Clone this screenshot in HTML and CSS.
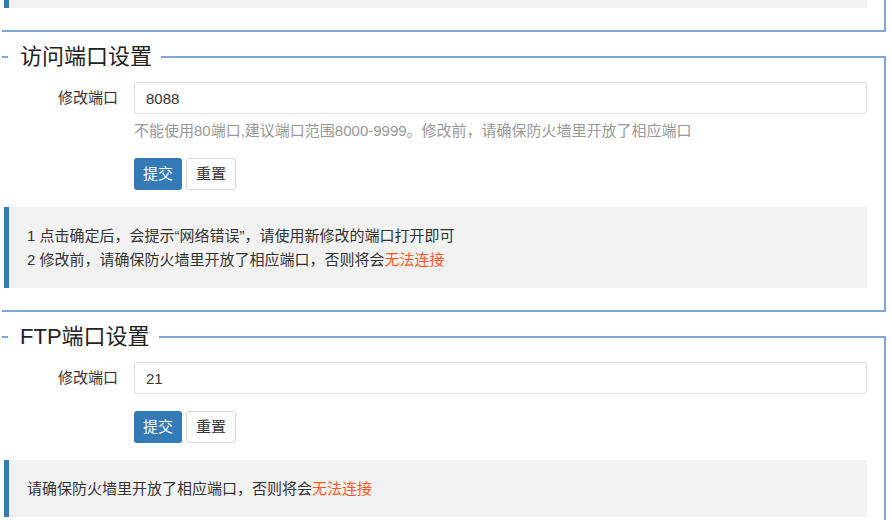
FILE: index.html
```html
<!DOCTYPE html>
<html lang="zh-CN">
<head>
<meta charset="utf-8">
<title>端口设置</title>
<link rel="stylesheet" href="styles.css">
</head>
<body>
<div class="page">
  <div class="tail">
    <div class="quote quote-cut"></div>
  </div>

  <fieldset class="panel">
    <legend class="panel-title">访问端口设置</legend>
    <form class="form">
      <div class="row">
        <label class="label">修改端口</label>
        <div class="field">
          <input class="input" type="text" value="8088">
          <div class="help">不能使用80端口,建议端口范围8000-9999。修改前，请确保防火墙里开放了相应端口</div>
        </div>
      </div>
      <div class="row">
        <span class="label"></span>
        <div class="actions">
          <button type="button" class="btn btn-primary">提交</button>
          <button type="button" class="btn btn-default">重置</button>
        </div>
      </div>
    </form>
    <div class="quote">
      <p>1 点击确定后，会提示“网络错误”，请使用新修改的端口打开即可</p>
      <p>2 修改前，请确保防火墙里开放了相应端口，否则将会<span class="warn">无法连接</span></p>
    </div>
  </fieldset>

  <fieldset class="panel">
    <legend class="panel-title">FTP端口设置</legend>
    <form class="form">
      <div class="row">
        <label class="label">修改端口</label>
        <div class="field">
          <input class="input" type="text" value="21">
        </div>
      </div>
      <div class="row">
        <span class="label"></span>
        <div class="actions">
          <button type="button" class="btn btn-primary">提交</button>
          <button type="button" class="btn btn-default">重置</button>
        </div>
      </div>
    </form>
    <div class="quote">
      <p>请确保防火墙里开放了相应端口，否则将会<span class="warn">无法连接</span></p>
    </div>
  </fieldset>
</div>
</body>
</html>
```

FILE: styles.css
```css
html, body {
  margin: 0;
  padding: 0;
  background: #fff;
  overflow: hidden;
}

body {
  font-family: "Liberation Sans", "Noto Sans CJK SC", sans-serif;
  font-size: 15px;
  color: #333;
}

.page {
  padding: 0 6px 0 2px;
}

.tail {
  border-right: 2px solid #7ea7d8;
  border-bottom: 2px solid #7ea7d8;
  padding: 0 17px 22px 2px;
}

.panel {
  margin: 10px 0 0 0;
  min-width: 0;
  border: 2px solid #7ea7d8;
  border-left: 0;
  padding: 10px 17px 22px 2px;
}

.panel-title {
  margin-left: 4px;
  padding: 0 9px 0 12px;
  font-size: 22px;
  line-height: 30px;
  color: #222;
}

.form {
  margin: 0;
}

.row {
  display: flex;
  align-items: flex-start;
  margin-bottom: 17px;
}

.label {
  flex: 0 0 130px;
  box-sizing: border-box;
  padding-right: 16px;
  text-align: right;
  line-height: 32px;
  color: #333;
}

.field {
  flex: 1;
  min-width: 0;
}

.input {
  display: block;
  box-sizing: border-box;
  width: 100%;
  height: 32px;
  padding: 0 11px;
  border: 1px solid #e2e2e2;
  border-radius: 2px;
  box-shadow: inset 0 1px 1px rgba(0, 0, 0, 0.04);
  font-family: inherit;
  font-size: 15px;
  color: #333;
  background: #fff;
  outline: none;
}

.help {
  margin-top: 7px;
  line-height: 20px;
  color: #999;
}

.actions {
  display: flex;
  gap: 4px;
}

.btn {
  height: 32px;
  padding: 0 9px;
  border-radius: 3px;
  font-family: inherit;
  font-size: 15px;
  line-height: 30px;
  cursor: pointer;
}

.btn-primary {
  background: #337ab7;
  border: 0;
  color: #fff;
}

.btn-default {
  background: #fff;
  border: 1px solid #d9d9d9;
  color: #333;
}

.quote {
  background: #f2f2f2;
  border-left: 5px solid #337ab7;
  padding: 17px 16px 16px 18px;
  line-height: 24px;
  color: #333;
}

.quote p {
  margin: 0;
}

.quote-cut {
  height: 8px;
  padding: 0;
}

.warn {
  color: #ff5722;
}
```
